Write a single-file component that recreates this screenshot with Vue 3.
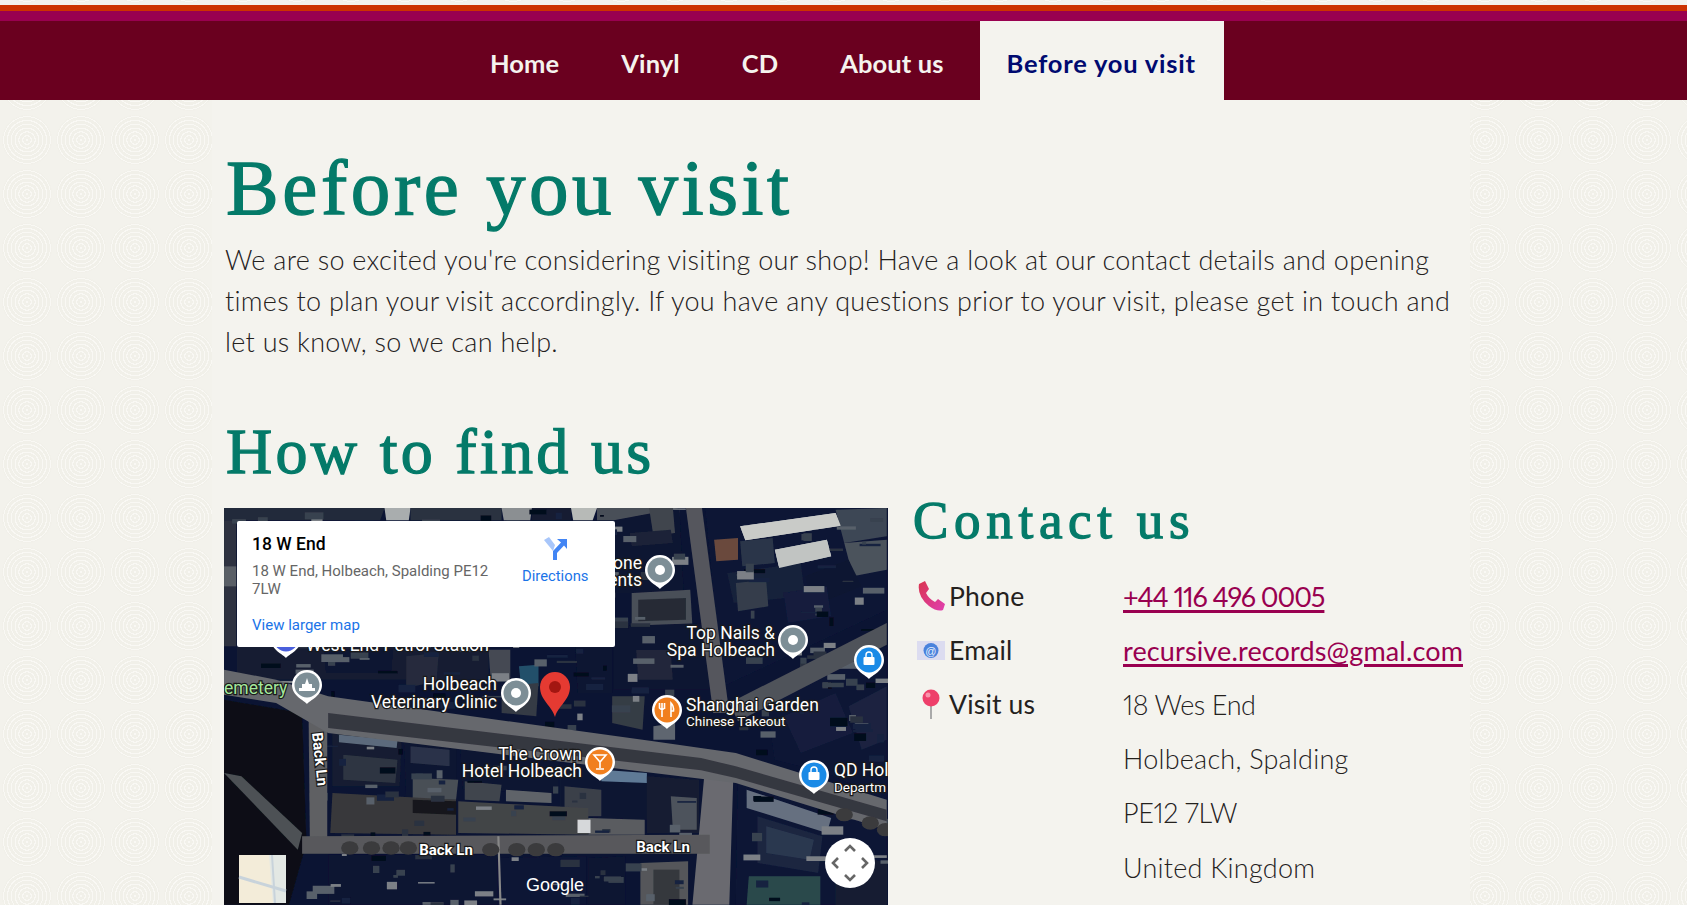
<script setup>
const navItems = [
  { label: 'Home' },
  { label: 'Vinyl' },
  { label: 'CD' },
  { label: 'About us' },
  { label: 'Before you visit', active: true },
]

// Satellite imagery, authored in a 1528x1191 grid that is squeezed onto the map
const shapes = [
  ['10,25 380,25 370,62 10,62', '#232a3a'],
  ['380,25 440,25 436,62 384,62', '#a9adae'],
  ['440,25 650,25 650,62 440,62', '#2a3140'],
  ['650,25 720,25 716,62 655,62', '#8b8f92'],
  ['720,25 810,25 810,62 720,62', '#141c33'],
  ['810,25 870,25 860,62 815,62', '#b7bab7'],
  ['870,25 1060,25 1060,62 870,62', '#4a4f58'],
  ['10,62 38,62 38,440 10,440', '#2d3340'],
  ['10,200 38,200 38,260 10,260', '#5a5f66'],
  ['909,62 1060,25 1070,280 909,280', '#0b1330'],
  ['990,25 1045,25 1050,100 1000,110', '#3f444d'],
  ['945,100 1040,90 1045,130 950,140', '#1c2438'],
  ['950,280 1085,270 1090,380 950,380', '#4a4f58'],
  ['965,300 1075,295 1075,360 965,365', '#262c36'],
  ['909,380 1120,370 1140,570 909,570', '#0a1230'],
  ['960,450 1040,450 1045,540 965,540', '#20263a'],
  ['1120,25 1538,25 1538,330 1160,560', '#0c1636'],
  ['1200,80 1420,40 1432,78 1212,122', '#c9cbc8'],
  ['1140,120 1195,115 1195,180 1145,185', '#6a4a3e'],
  ['1280,150 1400,120 1410,170 1290,205', '#c1c4c2'],
  ['1200,125 1275,115 1280,190 1205,200', '#2c3648'],
  ['1420,30 1538,25 1538,110 1440,130', '#3d4654'],
  ['1440,130 1538,120 1538,210 1460,230', '#4b525c'],
  ['1170,220 1340,190 1350,290 1185,310', '#16203a'],
  ['1190,250 1260,240 1265,320 1195,335', '#343e4c'],
  ['1350,230 1450,180 1480,260 1365,320', '#0b1530'],
  ['1300,280 1400,260 1410,350 1310,370', '#121d3e'],
  ['40,440 620,440 620,540 40,540', '#161d33'],
  ['240,450 400,450 395,520 245,520', '#0b1331'],
  ['430,470 505,460 500,545 430,565', '#252c3c'],
  ['620,450 670,450 670,545 625,545', '#454a53'],
  ['690,500 735,495 735,560 695,560', '#23506a'],
  ['820,440 905,440 905,580 825,580', '#0a1230'],
  ['650,560 735,550 730,650 650,640', '#343a44'],
  ['905,590 980,590 975,690 905,670', '#363c45'],
  ['1000,680 1050,670 1050,720 1000,720', '#5e6670'],
  ['1260,600 1538,440 1538,900 1400,820 1280,780', '#0c1636'],
  ['1300,650 1420,580 1460,700 1340,760', '#141e3c'],
  ['1450,620 1538,560 1538,720 1480,750', '#1a2340'],
  ['10,600 190,640 200,1030 160,1215 10,1215', '#0b1118'],
  ['10,820 50,830 190,1000 180,1050', '#4e5155'],
  ['260,690 420,710 415,860 260,860', '#141c30'],
  ['275,705 410,722 408,745 275,728', '#5c6b7c'],
  ['285,765 410,780 405,850 285,840', '#2f3642'],
  ['425,720 545,735 545,900 430,900', '#0c1530'],
  ['440,740 530,750 530,800 440,790', '#2a3348'],
  ['445,835 550,840 545,900 445,900', '#4a4f56'],
  ['555,745 780,775 780,880 560,870', '#0b1431'],
  ['565,845 650,855 645,905 565,900', '#3f454d'],
  ['660,870 765,880 765,910 660,905', '#5f6469'],
  ['785,790 985,815 985,960 785,950', '#0c1633'],
  ['795,860 880,870 880,950 795,950', '#3a3f4a'],
  ['880,810 985,820 985,850 880,845', '#5f7a96'],
  ['985,830 1105,840 1105,1000 985,1000', '#141c33'],
  ['1040,890 1100,895 1100,990 1045,990', '#4e535b'],
  ['260,880 545,900 545,1005 255,1000', '#39393b'],
  ['445,900 545,905 545,945 445,940', '#16181d'],
  ['550,905 850,925 850,1005 550,1000', '#434447'],
  ['850,955 980,960 980,1005 850,1005', '#5a5c60'],
  ['825,960 855,960 855,1000 825,1000', '#d6d8da'],
  ['250,1065 640,1065 640,1215 250,1215', '#0a1230'],
  ['640,1075 845,1070 845,1215 640,1215', '#0c1434'],
  ['850,1075 935,1070 935,1215 850,1215', '#0b1330'],
  ['970,1090 1080,1085 1080,1215 970,1215', '#55575a'],
  ['1000,1110 1060,1110 1060,1215 1000,1215', '#34373d'],
  ['1195,830 1538,970 1538,1215 1190,1215', '#0c1636'],
  ['1215,870 1410,955 1400,1000 1215,925', '#667080'],
  ['1240,950 1390,1010 1380,1120 1240,1090', '#1a2540'],
  ['1260,980 1370,1020 1360,1080 1260,1060', '#2c3850'],
  ['1220,1130 1385,1130 1385,1215 1215,1215', '#2a4a4c'],
  ['1420,1050 1538,1090 1538,1215 1420,1215', '#171f33'],
]

const roads = [
  ['1075,25 1112,25 1175,640 1138,640', '#55565d'],
  ['1120,790 1185,800 1175,1215 1090,1215', '#6a6b70'],
  ['1175,610 1538,370 1538,435 1195,665', '#50525a'],
  ['205,650 248,660 248,1040 208,1040', '#5f6064'],
  ['190,1010 1130,1005 1130,1062 190,1062', '#58595c'],
  ['10,510 130,540 250,590 1000,725 1190,760 1538,900 1538,990 1190,850 1000,820 250,700 130,610 10,585', '#66686d'],
  ['250,640 1110,775 1190,800 1538,930 1538,965 1190,835 1110,812 250,685', '#363741'],
]

// Fine rooftop texture: a fixed, seeded scatter so the picture never changes
function rooftopSpeckle() {
  const out = []
  let seed = 1337
  const rnd = () => (seed = (seed * 16807) % 2147483647) / 2147483647
  const tones = ['#39424f', '#2a3140', '#06091c', '#59616b', '#16233f', '#7b8086']
  const onRoad = (x, y) => {
    const roadY = 590 + (x - 250) * 0.175
    return (y > roadY - 10 && y < roadY + 120) || (x > 1060 && x < 1190) || (y > 1005 && y < 1062)
  }
  for (let i = 0; i < 420; i++) {
    const x = 10 + rnd() * 1520
    const y = 25 + rnd() * 1190
    const w = 8 + rnd() * 42
    const h = 4 + rnd() * 22
    const fill = tones[Math.floor(rnd() * tones.length)]
    if (!onRoad(x, y) && !(x < 200 && y > 600)) out.push({ x, y, w, h, fill })
  }
  return out
}
const speckle = rooftopSpeckle()

const trees = [
  [300, 1045], [350, 1045], [395, 1045], [435, 1045],
  [625, 1050], [685, 1050], [730, 1050], [775, 1050],
  [1440, 945], [1500, 970], [1535, 990],
]

const pins = [
  { x: 436, y: 62, color: '#7d8e96', kind: 'dot' },
  { x: 569, y: 132, color: '#7d8e96', kind: 'dot' },
  { x: 83, y: 177, color: '#7d8e96', kind: 'cem' },
  { x: 292, y: 185, color: '#7d8e96', kind: 'dot' },
  { x: 645, y: 152, color: '#1a8ae6', kind: 'bag' },
  { x: 590, y: 267, color: '#1a8ae6', kind: 'bag' },
  { x: 443, y: 202, color: '#f17f1e', kind: 'food' },
  { x: 376, y: 254, color: '#f17f1e', kind: 'bar' },
]

const labels = [
  { t: 'one', x: 418, y: 61, anchor: 'end' },
  { t: 'ents', x: 418, y: 78, anchor: 'end' },
  { t: 'Top Nails &', x: 551, y: 131, anchor: 'end' },
  { t: 'Spa Holbeach', x: 551, y: 148, anchor: 'end' },
  { t: 'Holbeach', x: 273, y: 182, anchor: 'end' },
  { t: 'Veterinary Clinic', x: 273, y: 200, anchor: 'end' },
  { t: 'Shanghai Garden', x: 462, y: 203, anchor: 'start' },
  { t: 'The Crown', x: 358, y: 252, anchor: 'end' },
  { t: 'Hotel Holbeach', x: 358, y: 269, anchor: 'end' },
  { t: 'QD Hol', x: 610, y: 268, anchor: 'start' },
]

const smallLabels = [
  { t: 'Chinese Takeout', x: 462, y: 218 },
  { t: 'Departm', x: 610, y: 284 },
]

const contacts = [
  { icon: 'phone', label: 'Phone', value: '+44 116 496 0005', link: true, fit: 'phone-fit' },
  { icon: 'mail', label: 'Email', value: 'recursive.records@gmal.com', link: true, fit: 'mail-fit' },
  { icon: 'pin', label: 'Visit us', value: '18 Wes End', fit: 'num-fit' },
  { value: 'Holbeach, Spalding' },
  { value: 'PE12 7LW', fit: 'num-fit' },
  { value: 'United Kingdom' },
]
</script>

<template>
  <div class="page">
    <header class="header">
      <div class="stripe orange"></div>
      <div class="stripe magenta"></div>
      <nav class="nav">
        <a v-for="item in navItems" :key="item.label" class="tab" :class="{ active: item.active }" href="#">{{ item.label }}</a>
      </nav>
    </header>

    <main class="main">
      <h1 class="h1">Before you visit</h1>
      <p class="intro">We are so excited you're considering visiting our shop! Have a look at our contact details and opening times to plan your visit accordingly. If you have any questions prior to your visit, please get in touch and let us know, so we can help.</p>
      <h2 class="h2">How to find us</h2>

      <div class="columns">
        <div class="map">
          <svg class="satellite" viewBox="0 0 664 397" width="664" height="397">
            <defs>
              <filter id="soft"><feGaussianBlur stdDeviation="1.6 1.2" /></filter>
            </defs>
            <rect width="664" height="397" fill="#0b1433" />
            <g transform="translate(-4.3 -8.3) scale(.4337 .3333)" filter="url(#soft)">
              <polygon v-for="(s, i) in shapes" :key="'s' + i" :points="s[0]" :fill="s[1]" />
              <rect v-for="(b, i) in speckle" :key="'b' + i" :x="b.x" :y="b.y" :width="b.w" :height="b.h" :fill="b.fill" />
              <polygon points="1200,80 1420,40 1432,78 1212,122" fill="#c9cbc8" />
              <polygon points="1280,150 1400,120 1410,170 1290,205" fill="#c1c4c2" />
              <polygon v-for="(r, i) in roads" :key="'r' + i" :points="r[0]" :fill="r[1]" />
              <polygon points="640,1010 645,1010 650,1215 645,1215" fill="#888" />
              <circle v-for="t in trees" :key="t[0]" :cx="t[0]" :cy="t[1]" r="20" fill="#3a3a3c" />
            </g>

            <text class="label" x="82" y="143">West End Petrol Station</text>
            <g transform="translate(62 131)">
              <path d="M0 19 C-3 15 -15 11 -15 0 A15 15 0 0 1 15 0 C15 11 3 15 0 19Z" fill="#fff" />
              <circle r="12.5" fill="#4a5fdc" />
            </g>

            <g v-for="(p, i) in pins" :key="'p' + i" :transform="`translate(${p.x} ${p.y})`">
              <path d="M0 19 C-3 15 -15 11 -15 0 A15 15 0 0 1 15 0 C15 11 3 15 0 19Z" fill="#fff" />
              <circle r="12.5" :fill="p.color" />
              <circle v-if="p.kind === 'dot'" r="5" fill="#fff" />
              <path v-else-if="p.kind === 'cem'" d="M0 -7 L2 -1 H5 V3 H8 V6 H-8 V3 H-5 V-1 H-2Z" fill="#fff" />
              <g v-else-if="p.kind === 'bag'" fill="#fff">
                <rect x="-5.5" y="-3" width="11" height="8" rx="1" />
                <path d="M-3 -3 V-5 A3 3 0 0 1 3 -5 V-3" fill="none" stroke="#fff" stroke-width="1.4" />
              </g>
              <g v-else-if="p.kind === 'food'" stroke="#fff" stroke-width="1.6" fill="none">
                <path d="M-5 -7 V-1 M-2.5 -7 V-1 M-7.5 -7 V-2 Q-5 1 -2.5 -2 M-5 0 V7" />
                <path d="M4 7 V-7 Q7 -4 6.5 1 L4 1" />
              </g>
              <g v-else stroke="#fff" stroke-width="1.6" fill="none">
                <path d="M-6 -7 H6 L0 0 Z M0 0 V6 M-4 7 H4" />
              </g>
            </g>

            <path transform="translate(331 186)" d="M0 23 C-3 12 -15 6 -15 -7 A15 15 0 0 1 15 -7 C15 6 3 12 0 23Z" fill="#e53a32" />
            <circle cx="331" cy="179" r="6" fill="#a31611" />

            <text v-for="l in labels" :key="l.t" class="label" :x="l.x" :y="l.y" :text-anchor="l.anchor">{{ l.t }}</text>
            <text v-for="l in smallLabels" :key="l.t" class="label small" :x="l.x" :y="l.y">{{ l.t }}</text>
            <text class="label green" x="0" y="186">emetery</text>
            <text class="label bold" x="222" y="347" text-anchor="middle">Back Ln</text>
            <text class="label bold" x="439" y="344" text-anchor="middle">Back Ln</text>
            <text class="label bold" transform="translate(88 225) rotate(84)" x="0" y="0">Back Ln</text>
            <text class="google" x="331" y="383" text-anchor="middle">Google</text>

            <g transform="translate(626 355)">
              <circle r="25" fill="#fff" />
              <path d="M-5 -12 L0 -17 L5 -12 M-5 12 L0 17 L5 12 M-12 -5 L-17 0 L-12 5 M12 -5 L17 0 L12 5" fill="none" stroke="#666" stroke-width="2.6" />
            </g>
            <g transform="translate(15 347)">
              <rect width="47" height="48" fill="#f3ecd9" />
              <path d="M30 0 L34 48 H47 V0Z" fill="#e3e8e4" />
              <path d="M0 22 L47 36" stroke="#c8d3db" stroke-width="3" />
              <path d="M33 0 L36 48" stroke="#c8d3db" stroke-width="2" />
            </g>
          </svg>

          <div class="card">
            <div class="card-text">
              <div class="place">18 W End</div>
              <div class="address">18 W End, Holbeach, Spalding PE12 7LW</div>
              <a class="larger" href="#">View larger map</a>
            </div>
            <a class="directions" href="#">
              <svg width="26" height="26" viewBox="0 0 26 26">
                <path d="M15 4 H25 V14 L22 10.5 L15 18 V25 H11 V16 L19 7.5Z" fill="#4285f4" />
                <path d="M2 5 L7 2 L13 10 L11 16Z" fill="#a8c6fa" />
              </svg>
              <span>Directions</span>
            </a>
          </div>
        </div>

        <section class="contact">
          <h3 class="h3">Contact us</h3>
          <div class="rows">
            <div v-for="(c, i) in contacts" :key="i" class="row">
              <div class="label-cell">
                <svg v-if="c.icon === 'phone'" class="ico" viewBox="0 0 28 30">
                  <defs><linearGradient id="ph" x1="0" y1="0" x2="1" y2="1"><stop offset="0" stop-color="#d9344f" /><stop offset="1" stop-color="#e03fb0" /></linearGradient></defs>
                  <path d="M2 3 L8 0 L12 8 L9 12 Q12 18 18 21 L21 18 L28 23 L26 29 Q20 31 12 25 Q0 15 2 3Z" fill="url(#ph)" />
                </svg>
                <svg v-else-if="c.icon === 'mail'" class="ico" viewBox="0 0 28 30">
                  <rect x="0" y="6" width="28" height="19" fill="#dcdcf0" />
                  <circle cx="14" cy="15.5" r="7.5" fill="#4a82dc" />
                  <text x="14" y="19.5" text-anchor="middle" class="at">@</text>
                </svg>
                <svg v-else-if="c.icon === 'pin'" class="ico" viewBox="0 0 28 30">
                  <rect x="13" y="14" width="2" height="16" fill="#a9a9a9" />
                  <circle cx="14" cy="9" r="8.5" fill="#ee3f6a" />
                  <circle cx="11" cy="6" r="2.5" fill="#f993ab" />
                </svg>
                <span v-if="c.label" class="label-text">{{ c.label }}</span>
              </div>
              <a v-if="c.link" class="value link" :class="c.fit" href="#">{{ c.value }}</a>
              <span v-else class="value" :class="c.fit">{{ c.value }}</span>
            </div>
          </div>
        </section>
      </div>
    </main>
  </div>
</template>

<style>
html, body { margin: 0; height: 100%; overflow: hidden; }
</style>

<style scoped>
.page {
  height: 905px;
  overflow: hidden;
  background-color: #f4f3ee;
  background-image:
    radial-gradient(circle at center, transparent 24px, #f3f2ec 25.5px),
    repeating-radial-gradient(circle at center, #f9f8f4 0 1.1px, #f1f0e9 1.1px 3.8px);
  background-size: 54px 54px;
  background-position: 0 5px;
  font-family: "Lato", "Liberation Sans", sans-serif;
  color: #24211d;
}
.header { padding-top: 5px; }
.stripe.orange { height: 6px; background: #cc3300; }
.stripe.magenta { height: 10px; background: #990050; }
.nav {
  height: 79px;
  display: flex;
  padding-left: 459px;
  background: #6a001f;
}
.tab {
  display: flex;
  align-items: center;
  padding: 4px 31px 0;
  font-size: 25.5px;
  font-weight: 700;
  color: #f5f3ee;
  text-decoration: none;
  letter-spacing: .1px;
}
.tab.active {
  padding: 4px 28px 0 27px;
  margin-left: 5px;
  background: #f4f3ee;
  color: #000a70;
  letter-spacing: .8px;
}
.main {
  margin: 0 217px 0 212px;
  padding: 43px 12px 0;
  height: 800px;
  background: #f4f3ee;
}
.h1, .h2, .h3 {
  margin: 0;
  font-family: "Liberation Serif", serif;
  font-weight: 400;
  color: #047a69;
  -webkit-text-stroke: 1.3px #047a69;
}
.h1 { font-size: 79px; line-height: 90px; letter-spacing: 3.6px; margin-left: 2px; }
.h2 { font-size: 64px; line-height: 70px; margin: 55px 0 0 2px; letter-spacing: 3.3px; }
.h3 { font-size: 53px; line-height: 60px; letter-spacing: 5.7px; }
.intro {
  margin: 6px 0 0 1px;
  font-size: 27px;
  letter-spacing: .27px;
  line-height: 41px;
  font-weight: 300;
}
.columns {
  display: flex;
  gap: 25px;
  margin-top: 21px;
}
.map {
  position: relative;
  width: 664px;
  height: 397px;
  flex: none;
  overflow: hidden;
  font-family: Roboto, sans-serif;
}
.satellite { display: block; }
.label {
  font-family: Roboto, sans-serif;
  font-size: 17.5px;
  fill: #fff;
  stroke: #1a1a1a;
  stroke-width: 2.4px;
  paint-order: stroke;
}
.label.small { font-size: 13.5px; }
.label.green { fill: #a5e79c; }
.label.bold { font-weight: 700; font-size: 15px; }
.google {
  font-family: "Liberation Sans", sans-serif;
  font-size: 18px;
  fill: #fff;
}
.at {
  font-family: "Liberation Sans", sans-serif;
  font-size: 11px;
  fill: #e6eefc;
}
.card {
  position: absolute;
  left: 13px;
  top: 13px;
  width: 378px;
  height: 126px;
  box-sizing: border-box;
  padding: 12px 15px;
  background: #fff;
  display: flex;
  border-radius: 2px;
}
.card-text { width: 250px; }
.place {
  font-size: 17.5px;
  font-weight: 500;
  color: #000;
  line-height: 22px;
}
.address {
  font-size: 15px;
  line-height: 18px;
  color: #666;
  margin-top: 7px;
}
.larger {
  display: block;
  margin-top: 18px;
  font-size: 15px;
  color: #1a73e8;
  text-decoration: none;
}
.directions {
  margin-left: 20px;
  display: flex;
  flex-direction: column;
  align-items: center;
  gap: 6px;
  padding-top: 2px;
  font-size: 14.8px;
  color: #1a73e8;
  text-decoration: none;
}
.contact { flex: 1; margin-top: -18px; }
.rows { margin-top: 19px; }
.row {
  display: flex;
  height: 54.2px;
  align-items: center;
  font-size: 27px;
  letter-spacing: .23px;
  font-weight: 300;
  font-variant-numeric: proportional-nums;
}
.label-cell {
  width: 210px;
  padding-left: 4px;
  flex: none;
  display: flex;
  align-items: center;
  gap: 4px;
  box-sizing: border-box;
  font-size: 26.5px;
  letter-spacing: .2px;
}
.ico { width: 28px; height: 30px; flex: none; }
.label-text { font-weight: 400; }
.value.link {
  color: #990050;
  font-weight: 400;
  text-decoration: underline;
  text-decoration-thickness: 3px;
  text-underline-offset: 3px;
}
.phone-fit { letter-spacing: -1.1px; }
.mail-fit { letter-spacing: .14px; }
.num-fit { letter-spacing: -.4px; }
</style>
